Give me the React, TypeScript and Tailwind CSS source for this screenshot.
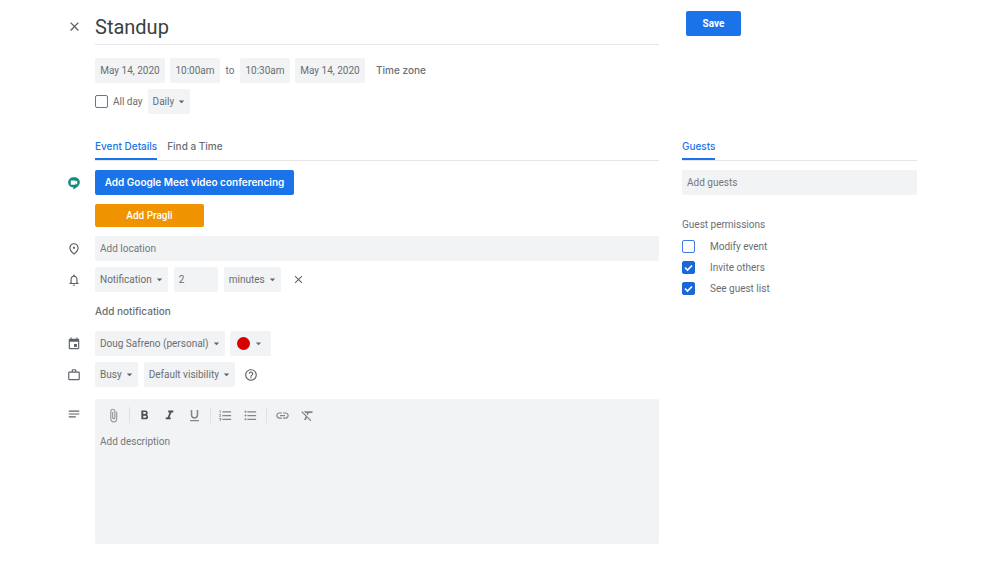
import React, { useState } from 'react';
import {
    MdArrowDropDown,
    MdAttachFile,
    MdClose,
    MdEvent,
    MdFormatBold,
    MdFormatClear,
    MdFormatItalic,
    MdFormatListBulleted,
    MdFormatListNumbered,
    MdFormatUnderlined,
    MdHelpOutline,
    MdLink,
    MdNotes,
    MdNotificationsNone,
    MdOutlinePlace,
    MdWorkOutline,
} from 'react-icons/md';

const field = 'h-[25px] rounded-xs bg-[#f1f3f4] text-[10px] text-[#6a6e73] outline-none';
const heading = 'font-[Inter,sans-serif] text-[10px] font-medium';

const MeetIcon = () => (
    <svg viewBox="0 0 24 24" className="size-3.5" aria-hidden="true">
        <path d="M12 2C6 2 2 5.500 2 10.800c0 5 4 8.700 9 8.900V23c5.500-2.400 11-7 11-12.200C22 5.500 18 2 12 2z" fill="#128c7a" />
        <path d="M6.500 7.500h8v2.500l3-2.500v7.500l-3-2.500V15h-8z" fill="#fff" />
    </svg>
);

const Row = ({ icon, children }: { icon?: React.ReactNode; children: React.ReactNode }) => (
    <div className="flex items-center">
        <div className="w-7 shrink-0 text-[14px] text-[#5f6368]">{icon}</div>
        <div className="flex min-w-0 flex-1 items-center">{children}</div>
    </div>
);

const Dropdown = ({ label, options }: { label: string; options: string[] }) => (
    <div className="relative flex">
        <select aria-label={label} className={`${field} field-sizing-content appearance-none pl-[5px] pr-4`}>
            {options.map((option) => (
                <option key={option}>{option}</option>
            ))}
        </select>
        <MdArrowDropDown className="pointer-events-none absolute right-0.5 top-1.5 text-[13px] text-[#5f6368]" />
    </div>
);

const Checkbox = ({ label, checked = false, gap }: { label: string; checked?: boolean; gap: string }) => {
    const [on, setOn] = useState(checked);

    return (
        <label className={`flex items-center text-[10px] text-[#6a6e73] ${gap}`}>
            <span className="relative flex size-[13px]">
                <input
                    type="checkbox"
                    checked={on}
                    onChange={(e) => setOn(e.target.checked)}
                    className="size-[13px] appearance-none rounded-xs border border-[#3f7be0] bg-white checked:border-[#1967d2] checked:bg-[#1a67dc]"
                />
                {on && (
                    <svg viewBox="0 0 13 13" className="pointer-events-none absolute inset-0 size-[13px]" aria-hidden="true">
                        <path d="M3 6.500l2.500 2.500L10 4.500" fill="none" stroke="#fff" strokeWidth="1.600" />
                    </svg>
                )}
            </span>
            {label}
        </label>
    );
};

const Tool = ({ label, children }: { label: string; children: React.ReactNode }) => (
    <button type="button" aria-label={label} className="flex size-[15px] items-center justify-center text-[15px]">
        {children}
    </button>
);

const Divider = () => <div className="h-4 w-px bg-[#dfe1e3]" />;

const Toolbar = () => (
    <div className="flex h-8 items-center pl-[11px] text-[#80868b]">
        <Tool label="Attach file"><MdAttachFile /></Tool>
        <div className="flex w-4 justify-center"><Divider /></div>
        <div className="flex gap-2.5 text-[#4c4f53]">
            <Tool label="Bold"><MdFormatBold /></Tool>
            <Tool label="Italic"><MdFormatItalic /></Tool>
            <Tool label="Underline"><MdFormatUnderlined className="text-[#80868b]" /></Tool>
        </div>
        <div className="flex w-4 justify-center"><Divider /></div>
        <div className="flex gap-2.5">
            <Tool label="Numbered list"><MdFormatListNumbered /></Tool>
            <Tool label="Bulleted list"><MdFormatListBulleted /></Tool>
        </div>
        <div className="flex w-[17px] justify-center"><Divider /></div>
        <div className="flex gap-2.5">
            <Tool label="Insert link"><MdLink /></Tool>
            <Tool label="Remove formatting"><MdFormatClear /></Tool>
        </div>
    </div>
);

const EventForm = () => (
    <div className="min-w-0">
        <div className="mt-2.5 flex h-[35px] items-stretch">
            <button type="button" aria-label="Close" className="flex h-8 w-7 shrink-0 items-center text-[15px] text-[#5f6368]">
                <MdClose />
            </button>
            <input
                aria-label="Title"
                defaultValue="Standup"
                className="min-w-0 flex-1 border-b border-[#e4e6e8] text-[20px] text-[#3c4043] outline-none"
            />
        </div>

        <div className="mt-[13px] flex items-center pl-7 text-[10px] text-[#6a6e73]">
            <button type="button" className={`${field} w-[70px]`}>May 14, 2020</button>
            <button type="button" className={`${field} ml-[5px] w-[50px]`}>10:00am</button>
            <span className="w-5 text-center">to</span>
            <button type="button" className={`${field} w-[50px]`}>10:30am</button>
            <button type="button" className={`${field} ml-[5px] w-[70px]`}>May 14, 2020</button>
            <button type="button" className={`${heading} ml-[11px]`}>Time zone</button>
        </div>

        <div className="mt-1.5 flex items-center gap-[5px] pl-7">
            <Checkbox label="All day" gap="gap-[5px]" />
            <Dropdown label="Repeat" options={['Daily', 'Weekly']} />
        </div>

        <div className={`${heading} ml-7 mt-5 flex h-[27px] gap-2.5 border-b border-[#e4e6e8] text-[#6a6e73]`} role="tablist">
            <button type="button" role="tab" aria-selected="true" className="border-b-2 border-[#1a73e8] text-[#1a73e8]">
                Event Details
            </button>
            <button type="button" role="tab" aria-selected="false" className="border-b-2 border-transparent">
                Find a Time
            </button>
        </div>

        <div className="mt-[9px] flex flex-col">
            <Row icon={<MeetIcon />}>
                <button type="button" className="h-[25px] w-[199px] rounded-xs bg-[#1a73e8] font-[Inter,sans-serif] text-[10px] font-semibold text-white">
                    Add Google Meet video conferencing
                </button>
            </Row>
            <div className="mt-[9px]">
                <Row>
                    <button type="button" className="h-[23px] w-[109px] rounded-xs bg-[#f09300] text-[10px] font-medium text-white">
                        Add Pragli
                    </button>
                </Row>
            </div>
            <div className="mt-[9px]">
                <Row icon={<MdOutlinePlace />}>
                    <input
                        aria-label="Location"
                        placeholder="Add location"
                        className={`${field} w-full px-[5px] placeholder:text-[#74787d]`}
                    />
                </Row>
            </div>
            <div className="mt-1.5">
                <Row icon={<MdNotificationsNone />}>
                    <div className="flex items-center gap-1.5">
                        <Dropdown label="Notification type" options={['Notification', 'Email']} />
                        <input aria-label="Amount" defaultValue="2" className={`${field} w-11 px-[5px]`} />
                        <Dropdown label="Unit" options={['minutes', 'hours', 'days']} />
                        <button type="button" aria-label="Remove notification" className="ml-[5px] text-[13px] text-[#5f6368]">
                            <MdClose />
                        </button>
                    </div>
                </Row>
            </div>
            <button type="button" className={`${heading} ml-7 mt-[11px] h-4 self-start text-[#6a6e73]`}>
                Add notification
            </button>
            <div className="mt-3">
                <Row icon={<MdEvent />}>
                    <div className="flex gap-[5px]">
                        <Dropdown label="Calendar" options={['Doug Safreno (personal)']} />
                        <button type="button" aria-label="Event color" className={`${field} flex w-[41px] items-center justify-between pl-[7px] pr-1.5`}>
                            <span className="size-[13px] rounded-full bg-[#d50000]" />
                            <MdArrowDropDown className="text-[13px]" />
                        </button>
                    </div>
                </Row>
            </div>
            <div className="mt-1.5">
                <Row icon={<MdWorkOutline />}>
                    <div className="flex items-center gap-1.5">
                        <Dropdown label="Availability" options={['Busy', 'Free']} />
                        <Dropdown label="Visibility" options={['Default visibility', 'Public', 'Private']} />
                        <button type="button" aria-label="Help" className="ml-[3px] text-[14px] text-[#5f6368]">
                            <MdHelpOutline />
                        </button>
                    </div>
                </Row>
            </div>
            <div className="mt-3 flex">
                <div className="w-7 shrink-0 pt-2 text-[14px] text-[#5f6368]"><MdNotes /></div>
                <div className="flex min-w-0 flex-1 flex-col rounded-xs bg-[#f1f3f4]">
                    <Toolbar />
                    <textarea
                        aria-label="Description"
                        placeholder="Add description"
                        className="h-[113px] resize-none px-[5px] pt-[3px] text-[10px] text-[#6a6e73] outline-none placeholder:text-[#74787d]"
                    />
                </div>
            </div>
        </div>
    </div>
);

const GuestPanel = () => (
    <div>
        <button type="button" className="ml-1 mt-[11px] block h-[25px] w-[55px] rounded-xs bg-[#1a73e8] text-[10px] font-bold text-white">
            Save
        </button>
        <div className={`${heading} mt-[98px] flex h-[27px] border-b border-[#e4e6e8]`} role="tablist">
            <button type="button" role="tab" aria-selected="true" className="border-b-2 border-[#1a73e8] text-[#1a73e8]">
                Guests
            </button>
        </div>
        <input
            aria-label="Guests"
            placeholder="Add guests"
            className={`${field} mt-[9px] block w-full px-[5px] placeholder:text-[#74787d]`}
        />
        <fieldset className="mt-[22px] flex flex-col gap-1.5 text-[10px] text-[#6a6e73]">
            <legend className="mb-1.5 h-4 leading-4">Guest permissions</legend>
            <Checkbox label="Modify event" gap="gap-[15px]" />
            <Checkbox label="Invite others" gap="gap-[15px]" checked />
            <Checkbox label="See guest list" gap="gap-[15px]" checked />
        </fieldset>
    </div>
);

export default function App() {
    return (
        <form
            className="grid min-h-screen grid-cols-[minmax(0,1fr)_235px] gap-x-[23px] bg-white pb-[18px] pl-[67px] pr-[83px] font-[Roboto,sans-serif]"
            onSubmit={(e) => e.preventDefault()}
        >
            <EventForm />
            <GuestPanel />
        </form>
    );
}
